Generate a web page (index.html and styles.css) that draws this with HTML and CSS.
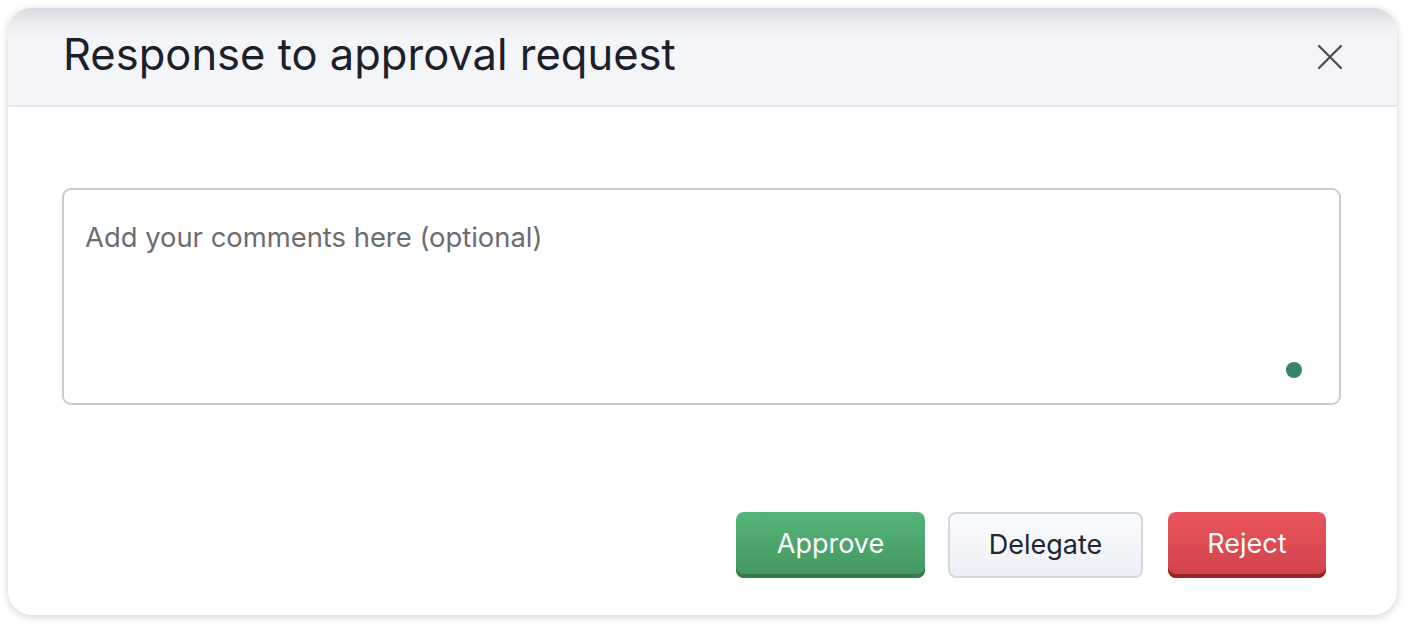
FILE: index.html
```html
<!DOCTYPE html>
<html>
<head>
<meta charset="utf-8">
<link rel="stylesheet" href="styles.css">
</head>
<body>
<div class="dialog">
  <div class="dialog-header">
    <h1 class="dialog-title">Response to approval request</h1>
    <button class="close-btn" aria-label="Close">
      <svg width="26" height="26" viewBox="0 0 26 26"><path d="M2 2 L24 24 M24 2 L2 24" stroke="#4a4b4f" stroke-width="2.2" stroke-linecap="round"/></svg>
    </button>
  </div>
  <div class="dialog-body">
    <div class="comment-wrap">
      <textarea class="comment" placeholder="Add your comments here (optional)"></textarea>
      <span class="status-dot"></span>
    </div>
    <div class="actions">
      <button class="btn btn-approve">Approve</button>
      <button class="btn btn-delegate">Delegate</button>
      <button class="btn btn-reject">Reject</button>
    </div>
  </div>
</div>
</body>
</html>
```
FILE: styles.css
```css
* { box-sizing: border-box; }
html, body { margin: 0; background: #ffffff; }
body {
  padding: 8px 12px 13px 8px;
  font-family: Inter, "Noto Sans", sans-serif;
}
.dialog {
  width: 1389px;
  height: 607px;
  border-radius: 24px;
  background: #ffffff;
  box-shadow: 0 2px 8px rgba(0,0,0,0.18);
  overflow: hidden;
  display: flex;
  flex-direction: column;
}
.dialog-header {
  height: 99px;
  flex: none;
  background: linear-gradient(#d9dadf 0px, #eeeff3 18px, #f4f5f9 30px, #f4f5f9 100%);
  border-bottom: 2px solid #e2e4ee;
  display: flex;
  align-items: center;
  justify-content: space-between;
  padding: 0 54px 0 55px;
}
.dialog-title {
  margin: 0;
  font-weight: 400;
  font-size: 43.5px;
  color: #1d1f2b;
  letter-spacing: 0;
  padding-bottom: 6px;
}
.close-btn {
  border: 0;
  background: transparent;
  padding: 0;
  width: 26px;
  height: 26px;
  display: flex;
}
.dialog-body {
  flex: 1;
  display: flex;
  flex-direction: column;
  padding: 81px 56px 37px 54px;
}
.comment-wrap {
  position: relative;
  height: 217px;
}
.comment {
  width: 100%;
  height: 100%;
  border: 2px solid #c9cbd6;
  border-radius: 9px;
  resize: none;
  padding: 30px 21px;
  font-family: Inter, "Noto Sans", sans-serif;
  font-size: 27.4px;
  color: #222;
  outline: none;
}
.comment::placeholder { color: #6c6c70; }
.status-dot {
  position: absolute;
  right: 39px;
  bottom: 27px;
  width: 16px;
  height: 16px;
  border-radius: 50%;
  background: #378371;
}
.actions {
  margin-top: auto;
  display: flex;
  justify-content: flex-end;
  gap: 23px;
  padding-right: 15px;
}
.btn {
  height: 66px;
  border-radius: 8px;
  font-family: Inter, "Noto Sans", sans-serif;
  font-size: 27px;
  padding: 0;
  cursor: pointer;
}
.btn-approve {
  width: 189px;
  color: #fff;
  border: 0;
  background: linear-gradient(#53b479, #44975f);
  box-shadow: inset 0 -4px 0 #357a4b;
  padding-bottom: 3px;
}
.btn-delegate {
  width: 195px;
  color: #23262f;
  border: 2px solid #d3d5df;
  background: linear-gradient(#fafbfd, #eceff6);
  padding-bottom: 2px;
}
.btn-reject {
  width: 158px;
  margin-left: 2px;
  color: #fff;
  border: 0;
  background: linear-gradient(#e9545c, #d1434b);
  box-shadow: inset 0 -4px 0 #9b2429;
  padding-bottom: 3px;
}
```
